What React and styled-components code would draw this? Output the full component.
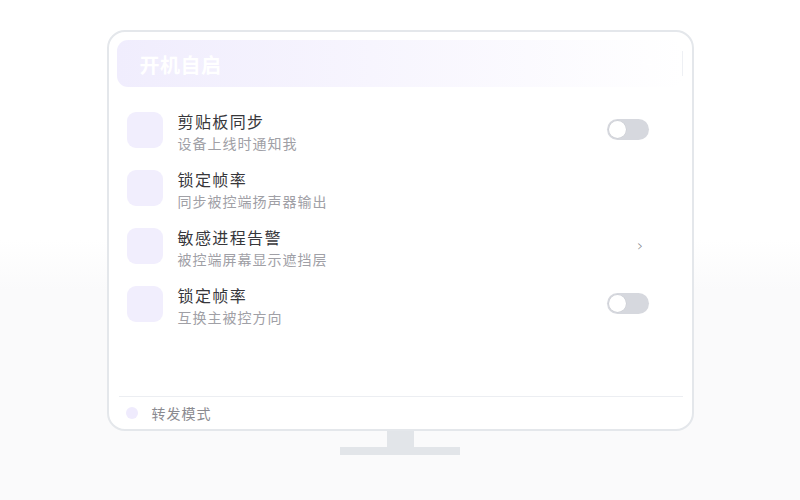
import React from 'react'
import styled, { createGlobalStyle } from 'styled-components'

const GlobalStyle = createGlobalStyle`
    html, body {
        margin: 0;
        padding: 0;
    }

    body {
        font-family: "Noto Sans", "Noto Sans CJK SC", sans-serif;
        background: linear-gradient(to bottom, #ffffff 0, #ffffff 240px, #fafafb 290px, #fafafb 100%);
        min-height: 500px;
    }
`

const Page = styled.main`
    width: 800px;
    height: 500px;
    display: flex;
    flex-direction: column;
    align-items: center;
    padding-top: 30px;
    box-sizing: border-box;
`

const Screen = styled.section`
    width: 587px;
    height: 401px;
    box-sizing: border-box;
    border: 2px solid #e4e7eb;
    border-radius: 18px;
    background: #ffffff;
    padding: 8px 9px 0 8px;
    display: flex;
    flex-direction: column;
`

const Header = styled.header`
    height: 47px;
    border-radius: 11px;
    background: linear-gradient(to right, #f0edfd 0%, #f7f5fe 45%, #ffffff 100%);
    display: flex;
    align-items: center;
    padding-left: 23px;

    h1 {
        margin: 2px 0 0;
        flex-grow: 1;
        font-size: 20px;
        font-weight: 700;
        color: #ffffff;
        letter-spacing: 0.5px;
    }

    .ghost {
        font-size: 13px;
        color: #ffffff;
        margin-right: 14px;
    }

    .rule {
        width: 1px;
        height: 25px;
        background: #eef0f4;
    }
`

const List = styled.div`
    display: flex;
    flex-direction: column;
    gap: 5px;
    padding: 16px 34px 0 10px;
    flex-grow: 1;
`

const Row = styled.div`
    display: flex;
    align-items: center;
    height: 53px;
`

const Tile = styled.div`
    width: 36px;
    height: 36px;
    border-radius: 9px;
    background: #f1eefd;
    flex-shrink: 0;
`

const Texts = styled.div`
    flex-grow: 1;
    margin-left: 15px;
    padding-top: 5px;

    .title {
        font-size: 16px;
        line-height: 20px;
        letter-spacing: 1.4px;
        color: #37373b;
    }

    .sub {
        margin-top: 3px;
        font-size: 14px;
        line-height: 18px;
        letter-spacing: 1px;
        color: #a0a0a6;
    }
`

const Toggle = styled.div`
    width: 42px;
    height: 21px;
    border-radius: 11px;
    background: #d6d8de;
    position: relative;

    &::after {
        content: '';
        position: absolute;
        left: 2px;
        top: 2px;
        width: 17px;
        height: 17px;
        border-radius: 50%;
        background: #ffffff;
        box-shadow: 0 0 0 0.5px #c8cad0;
    }
`

const Chevron = styled.span`
    font-size: 16px;
    color: #80828b;
    margin-right: 5px;
    font-family: "DejaVu Sans", sans-serif;
    font-weight: 300;
`

const Footer = styled.footer`
    height: 32px;
    border-top: 1px solid #eceef2;
    margin: 0 0 0 2px;
    display: flex;
    align-items: center;
    padding-left: 7px;
    gap: 14px;

    .dot {
        width: 12px;
        height: 12px;
        border-radius: 50%;
        background: #efebfd;
    }

    span {
        font-size: 14px;
        letter-spacing: 1px;
        color: #8a8a90;
    }
`

const Neck = styled.div`
    width: 27px;
    height: 16px;
    background: #e2e5e9;
`

const Base = styled.div`
    width: 120px;
    height: 8px;
    background: #e2e5e9;
`

const rows = [
    { title: '剪贴板同步', sub: '设备上线时通知我', action: 'toggle' },
    { title: '锁定帧率', sub: '同步被控端扬声器输出' },
    { title: '敏感进程告警', sub: '被控端屏幕显示遮挡层', action: 'arrow' },
    { title: '锁定帧率', sub: '互换主被控方向', action: 'toggle' },
]

const App = () => {
    return (
        <>
            <GlobalStyle />
            <Page>
                <Screen>
                    <Header>
                        <h1>开机自启</h1>
                        <span className='ghost'>设置</span>
                        <div className='rule' />
                    </Header>
                    <List>
                        {rows.map((r, i) => (
                            <Row key={i}>
                                <Tile />
                                <Texts>
                                    <div className='title'>{r.title}</div>
                                    <div className='sub'>{r.sub}</div>
                                </Texts>
                                {r.action === 'toggle' && <Toggle />}
                                {r.action === 'arrow' && <Chevron>›</Chevron>}
                            </Row>
                        ))}
                    </List>
                    <Footer>
                        <div className='dot' />
                        <span>转发模式</span>
                    </Footer>
                </Screen>
                <Neck />
                <Base />
            </Page>
        </>
    )
}

export default App
